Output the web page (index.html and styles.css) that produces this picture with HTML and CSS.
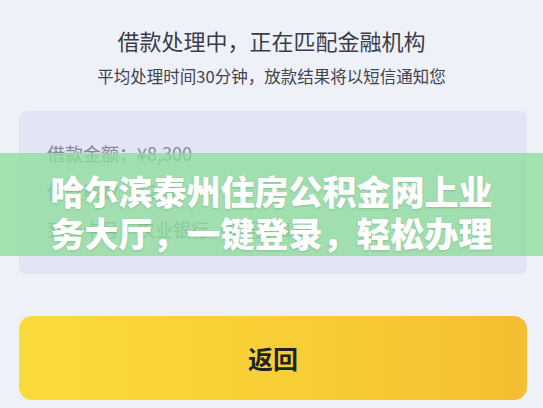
FILE: index.html
```html
<!DOCTYPE html>
<html lang="zh-CN">
<head>
    <meta charset="UTF-8">
    <meta name="viewport" content="width=device-width, initial-scale=1.0">
    <title>借款处理中</title>
    <link rel="stylesheet" href="styles.css">
</head>
<body>
    <div class="status">
        <h1>借款处理中，正在匹配金融机构</h1>
        <p>平均处理时间30分钟，放款结果将以短信通知您</p>
    </div>

    <div class="loan-card">
        <div class="loan-row">借款金额：¥8,300</div>
        <div class="loan-row">借款期数：12期</div>
        <div class="loan-row">到账卡号：农业银行（尾号6218）</div>
    </div>

    <div class="actions">
        <button type="button" class="back-btn">返回</button>
    </div>

    <div class="banner">
        <h2>哈尔滨泰州住房公积金网上业<br>务大厅，一键登录，轻松办理</h2>
    </div>
</body>
</html>
```

FILE: styles.css
```css
body {
    font-family: "Noto Sans CJK SC", "Noto Sans", sans-serif;
    background-color: #eff1f9;
    color: #3b3e4a;
    margin: 0;
    padding: 25px 0 0;
    position: relative;
    height: 383px;
    overflow: hidden;
}

.status {
    text-align: center;
}

.status h1 {
    font-size: 22px;
    font-weight: 400;
    line-height: 30px;
    margin: 0;
    color: #3a3d49;
}

.status p {
    font-size: 16.5px;
    line-height: 24px;
    margin: 9px 0 0;
    color: #41444f;
}

.loan-card {
    margin: 23px 16px 0 19px;
    padding: 23px 28px 26px;
    background-color: #e3e4f4;
    border-radius: 7px;
}

.loan-row {
    font-size: 18px;
    line-height: 38px;
    color: #85879a;
}

.actions {
    margin: 42px 16px 0 19px;
}

.back-btn {
    display: block;
    width: 100%;
    height: 84px;
    border: none;
    border-radius: 13px;
    background: linear-gradient(90deg, #fadb3a 0%, #f8cf36 50%, #f5bd31 100%);
    font-family: inherit;
    font-size: 25px;
    font-weight: 700;
    color: #222;
    cursor: pointer;
}

/* promo strip laid over the card */
.banner {
    position: absolute;
    left: 0;
    right: 0;
    top: 153px;
    height: 103px;
    background-color: rgba(142, 220, 156, 0.78);
    box-sizing: border-box;
    padding-top: 17px;
}

.banner h2 {
    margin: 0;
    text-align: center;
    font-size: 34px;
    font-weight: 900;
    line-height: 42px;
    color: #fff;
    text-shadow: 0 1px 2px rgba(60, 110, 70, 0.25);
}
```
